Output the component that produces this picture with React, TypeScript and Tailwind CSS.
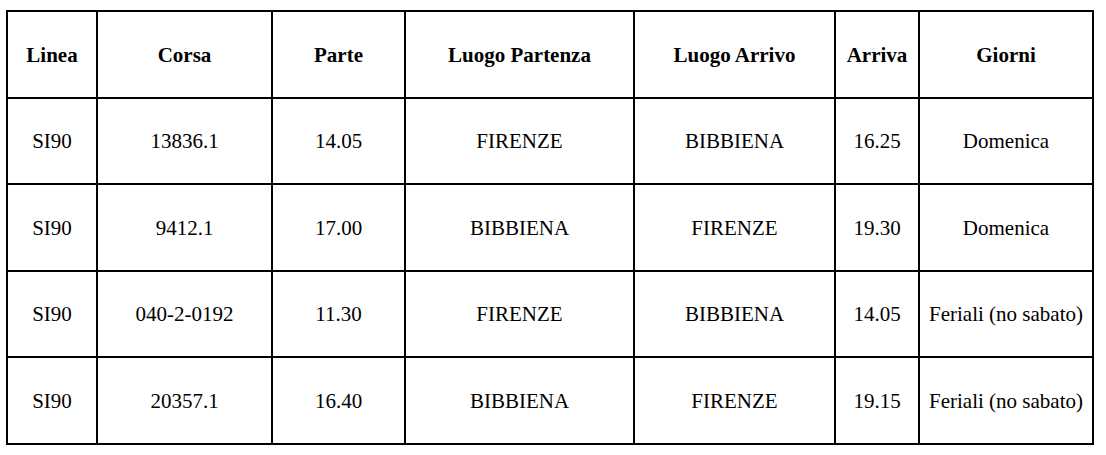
import React from "react";

const headers = ["Linea", "Corsa", "Parte", "Luogo Partenza", "Luogo Arrivo", "Arriva", "Giorni"];
const rows = [
  ["SI90", "13836.1", "14.05", "FIRENZE", "BIBBIENA", "16.25", "Domenica"],
  ["SI90", "9412.1", "17.00", "BIBBIENA", "FIRENZE", "19.30", "Domenica"],
  ["SI90", "040-2-0192", "11.30", "FIRENZE", "BIBBIENA", "14.05", "Feriali (no sabato)"],
  ["SI90", "20357.1", "16.40", "BIBBIENA", "FIRENZE", "19.15", "Feriali (no sabato)"],
];
const widths = [90, 175, 133, 229, 201, 84, 174];

export default function App() {
  return (
    <div className="bg-white w-[1106px] h-[455px] pt-[10px] pl-[6px] text-black" style={{ fontFamily: '"Liberation Serif", "Times New Roman", serif' }}>
      <table className="border-collapse table-fixed w-[1088px] text-[21px] leading-none">
        <colgroup>
          {widths.map((w, i) => (
            <col key={i} style={{ width: w }} />
          ))}
        </colgroup>
        <thead>
          <tr className="h-[86.5px]">
            {headers.map((h) => (
              <th key={h} className="border-2 border-black text-center align-middle font-bold p-0 pt-[2px]">
                {h}
              </th>
            ))}
          </tr>
        </thead>
        <tbody>
          {rows.map((r, i) => (
            <tr key={i} className="h-[86.5px]">
              {r.map((c, j) => (
                <td key={j} className="border-2 border-black text-center align-middle p-0 pt-[2px] whitespace-nowrap">
                  {c}
                </td>
              ))}
            </tr>
          ))}
        </tbody>
      </table>
    </div>
  );
}
